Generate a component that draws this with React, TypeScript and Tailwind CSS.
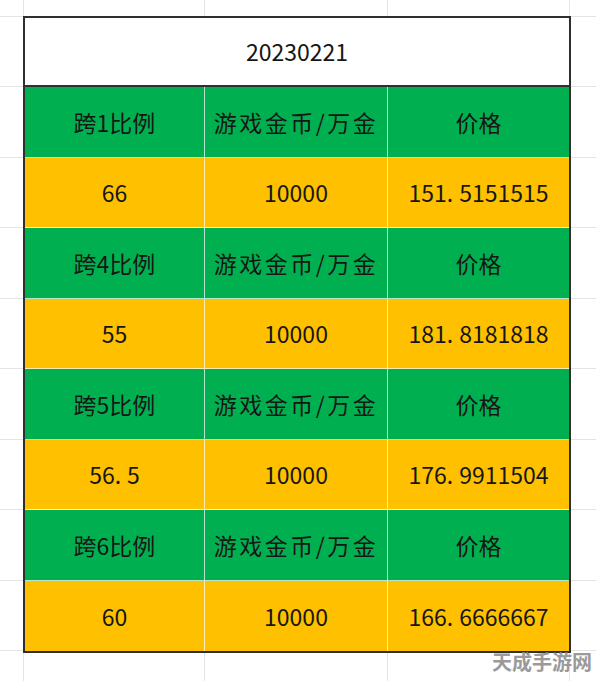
import React from 'react';

type Row = { kind: 'head' | 'data'; cells: string[] };

const rows: Row[] = [
  { kind: 'head', cells: ['跨1比例', '游戏金币/万金', '价格'] },
  { kind: 'data', cells: ['66', '10000', '151.5151515'] },
  { kind: 'head', cells: ['跨4比例', '游戏金币/万金', '价格'] },
  { kind: 'data', cells: ['55', '10000', '181.8181818'] },
  { kind: 'head', cells: ['跨5比例', '游戏金币/万金', '价格'] },
  { kind: 'data', cells: ['56.5', '10000', '176.9911504'] },
  { kind: 'head', cells: ['跨6比例', '游戏金币/万金', '价格'] },
  { kind: 'data', cells: ['60', '10000', '166.6666667'] },
];

// numbers in the sheet show a wide gap after the decimal point
const Num: React.FC<{ text: string }> = ({ text }) => {
  const i = text.indexOf('.');
  if (i < 0) return <>{text}</>;
  return (
    <>
      {text.slice(0, i + 1)}
      <span className="ml-[6px]">{text.slice(i + 1)}</span>
    </>
  );
};

const SideStrip: React.FC = () => (
  <div className="flex flex-col">
    <div className="h-[71px] border-b border-[#e4e4e4]" />
    {rows.map((_, i) => (
      <div key={i} className="h-[70.5px] border-b border-[#e4e4e4]" />
    ))}
  </div>
);

export default function App() {
  return (
    <div
      className="relative w-[596px] h-[681px] overflow-hidden bg-white text-[#161616]"
      style={{ fontFamily: '"Noto Sans CJK SC", "Noto Sans", sans-serif' }}
    >
      {/* sheet gridlines above the table */}
      <div className="grid grid-cols-[24px_181px_183px_182px_1fr] h-[17px]">
        <div className="border-r border-b border-[#e4e4e4]" />
        <div className="border-r border-b border-[#e4e4e4]" />
        <div className="border-r border-b border-[#e4e4e4]" />
        <div className="border-r border-b border-[#e4e4e4]" />
        <div className="border-b border-[#e4e4e4]" />
      </div>

      <div className="flex -mt-[1px]">
        <div className="w-[23px] shrink-0">
          <SideStrip />
        </div>

        {/* the table */}
        <div className="w-[548px] shrink-0 border-2 border-[#2f2f2f]">
          <div className="h-[69px] flex items-center justify-center bg-white border-b-2 border-[#2f2f2f] text-[23px]">
            20230221
          </div>
          {rows.map((r, ri) => (
            <div
              key={ri}
              className={`grid grid-cols-[180px_183px_1fr] h-[70.5px] ${
                r.kind === 'head' ? 'bg-[#00b050]' : 'bg-[#ffc000]'
              } ${ri < rows.length - 1 ? 'border-b border-white/70' : ''}`}
            >
              {r.cells.map((c, ci) => (
                <div
                  key={ci}
                  className={`flex items-center justify-center text-[23px] ${
                    ci < 2 ? 'border-r border-white/70' : ''
                  } ${r.kind === 'head' && ci === 1 ? 'tracking-[2.5px]' : ''}`}
                >
                  {r.kind === 'data' ? <Num text={c} /> : c}
                </div>
              ))}
            </div>
          ))}
        </div>

        <div className="flex-1">
          <SideStrip />
        </div>
      </div>

      {/* sheet gridlines below the table */}
      <div className="grid grid-cols-[24px_181px_183px_182px_1fr] h-[40px]">
        <div className="border-r border-[#e4e4e4]" />
        <div className="border-r border-[#e4e4e4]" />
        <div className="border-r border-[#e4e4e4]" />
        <div className="border-r border-[#e4e4e4]" />
        <div />
      </div>

      {/* watermark */}
      <div className="absolute left-[492px] top-[652px] text-[20px] font-bold leading-none text-[#9a9a9a]">
        天成手游网
      </div>
    </div>
  );
}
